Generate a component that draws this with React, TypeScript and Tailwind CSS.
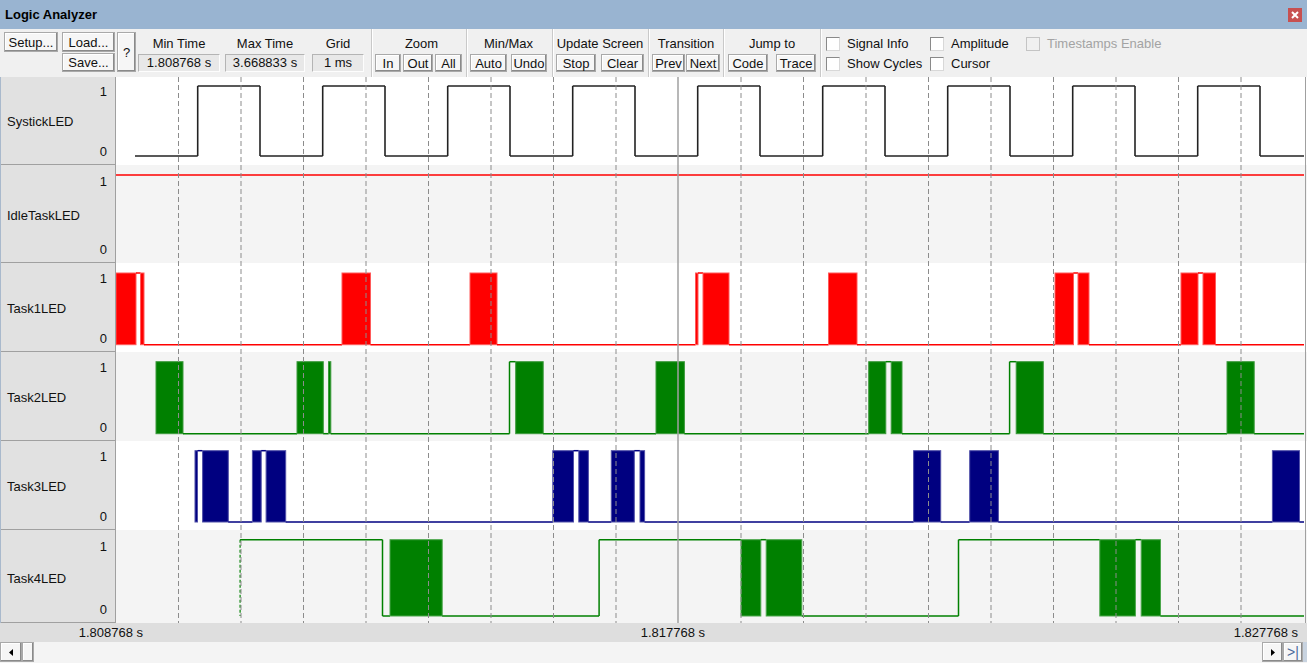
type Kind = 'L' | 'H' | 'F';
type Seg = [Kind, number, number];

interface Signal {
  name: string;
  top: number;
  height: number;
  shade: boolean;
  hi: number;
  lo: number;
  color: string;
  edge: string;
  width: number;
  segs: Seg[];
  dashStart?: boolean;
}

// plot origin in page coordinates
const X0 = 116;
const Y0 = 77;
const PLOT_W = 1191;
const PLOT_H = 546;

function systick(): Seg[] {
  const segs: Seg[] = [['L', 135, 197.7]];
  for (let k = 0; k < 9; k++) {
    const r = 197.7 + 125 * k;
    segs.push(['H', r, r + 62.3]);
    segs.push(['L', r + 62.3, k === 8 ? 1304 : r + 125]);
  }
  return segs;
}

const signals: Signal[] = [
  { name: 'SystickLED', top: 77, height: 88, shade: false, hi: 86, lo: 156, color: '#222', edge: '#222', width: 1.6, segs: systick() },
  { name: 'IdleTaskLED', top: 165, height: 98, shade: true, hi: 175, lo: 255, color: '#ff0000', edge: '#ff0000', width: 1.4, segs: [['H', 116, 1304]] },
  {
    name: 'Task1LED', top: 263, height: 89, shade: false, hi: 273, lo: 344.7, color: '#ff0000', edge: '#ff5a5a', width: 1.5,
    segs: [
      ['F', 116, 136], ['H', 136, 140.5], ['F', 140.5, 144], ['L', 144, 342], ['F', 342, 370.5], ['L', 370.5, 470],
      ['F', 470, 497], ['L', 497, 695.5], ['F', 695.5, 698], ['H', 698, 703], ['F', 703, 729], ['L', 729, 828.5],
      ['F', 828.5, 857], ['L', 857, 1055], ['F', 1055, 1073.5], ['H', 1073.5, 1078], ['F', 1078, 1089], ['L', 1089, 1181],
      ['F', 1181, 1198], ['H', 1198, 1203], ['F', 1203, 1215.5], ['L', 1215.5, 1304],
    ],
  },
  {
    name: 'Task2LED', top: 352, height: 89, shade: true, hi: 361.7, lo: 433.7, color: '#008000', edge: '#3c9a3c', width: 1.5,
    segs: [
      ['F', 156, 183], ['L', 183, 297], ['F', 297, 323.3], ['L', 323.3, 328.5], ['F', 328.5, 330.8], ['L', 330.8, 509.5],
      ['H', 509.5, 515.7], ['F', 515.7, 543.2], ['L', 543.2, 656], ['F', 656, 684.4], ['L', 684.4, 868.7],
      ['F', 868.7, 885.8], ['H', 885.8, 891.2], ['F', 891.2, 902], ['L', 902, 1009.6], ['H', 1009.6, 1016.2],
      ['F', 1016.2, 1043.3], ['L', 1043.3, 1227], ['F', 1227, 1254.2], ['L', 1254.2, 1304],
    ],
  },
  {
    name: 'Task3LED', top: 441, height: 89, shade: false, hi: 450.7, lo: 522, color: '#000080', edge: '#5050a8', width: 1.5,
    segs: [
      ['F', 195, 197.5], ['H', 197.5, 202.6], ['F', 202.6, 228.3], ['L', 228.3, 252.4], ['F', 252.4, 261.2],
      ['H', 261.2, 266.1], ['F', 266.1, 285.7], ['L', 285.7, 552.8], ['F', 552.8, 573.5], ['H', 573.5, 578.8],
      ['F', 578.8, 588.4], ['L', 588.4, 611.3], ['F', 611.3, 634.3], ['H', 634.3, 640], ['F', 640, 644.6],
      ['L', 644.6, 913.6], ['F', 913.6, 940.7], ['L', 940.7, 969.7], ['F', 969.7, 998.4], ['L', 998.4, 1272.4],
      ['F', 1272.4, 1299.5], ['L', 1299.5, 1304],
    ],
  },
  {
    name: 'Task4LED', top: 530, height: 93, shade: true, hi: 539.7, lo: 616, color: '#008000', edge: '#4aa64a', width: 1.5, dashStart: true,
    segs: [
      ['H', 240.1, 382.5], ['L', 382.5, 390], ['F', 390, 442.2], ['L', 442.2, 599.1], ['H', 599.1, 741],
      ['F', 741, 760.8], ['H', 760.8, 766.2], ['F', 766.2, 801.8], ['L', 801.8, 958.5], ['H', 958.5, 1099.8],
      ['F', 1099.8, 1135.4], ['H', 1135.4, 1141.2], ['F', 1141.2, 1160.5], ['L', 1160.5, 1304],
    ],
  },
];

function Wave({ sig }: { sig: Signal }) {
  const hi = sig.hi - Y0;
  const lo = sig.lo - Y0;
  const els: React.ReactNode[] = [];
  sig.segs.forEach(([k, a, b], i) => {
    const x1 = a - X0;
    const x2 = b - X0;
    if (k === 'F') {
      els.push(
        <rect key={'r' + i} x={x1} y={hi} width={x2 - x1} height={lo - hi} fill={sig.color} stroke={sig.edge} strokeWidth={1} />
      );
    } else {
      const y = k === 'H' ? hi : lo;
      els.push(<line key={'l' + i} x1={x1} x2={x2} y1={y} y2={y} stroke={sig.color} strokeWidth={sig.width} />);
    }
    const prev = sig.segs[i - 1];
    if (prev && prev[0] !== 'F' && k !== 'F' && prev[0] !== k) {
      els.push(<line key={'v' + i} x1={x1} x2={x1} y1={hi} y2={lo} stroke={sig.color} strokeWidth={sig.width} />);
    }
  });
  if (sig.dashStart) {
    const x = sig.segs[0][1] - X0;
    els.push(<line key="ds" x1={x} x2={x} y1={hi} y2={lo} stroke={sig.color} strokeWidth={1.2} strokeDasharray="3 2" />);
  }
  return <g>{els}</g>;
}

function Plot() {
  const grid: number[] = [];
  for (let k = 0; k < 18; k++) grid.push(178 + 62.5 * k);
  return (
    <svg width={PLOT_W} height={PLOT_H} className="block">
      {signals.map((s) => (
        <rect key={s.name} x={0} y={s.top - Y0} width={PLOT_W} height={s.height} fill={s.shade ? '#f4f4f4' : '#ffffff'} />
      ))}
      {signals.map((s) => (
        <Wave key={s.name} sig={s} />
      ))}
      {grid.map((g) =>
        g === 678 ? (
          <line key={g} x1={g - X0} x2={g - X0} y1={0} y2={PLOT_H} stroke="#a0a0a0" strokeWidth={1.5} />
        ) : (
          <line key={g} x1={g - X0 + 0.5} x2={g - X0 + 0.5} y1={0} y2={PLOT_H} stroke="#8c8c8c" strokeWidth={1} strokeDasharray="5 3" />
        )
      )}
      <line x1={1189.5} x2={1189.5} y1={0} y2={PLOT_H} stroke="#a0a0a0" strokeWidth={1} />
    </svg>
  );
}

function Btn({ className, children }: { className: string; children: React.ReactNode }) {
  return (
    <div
      className={`flex items-center justify-center border border-[#a9a9a9] bg-[#f6f6f6] leading-none shadow-[inset_-1px_-1px_0_#8a8a8a,inset_1px_1px_0_#ffffff] ${className}`}
    >
      {children}
    </div>
  );
}

function Field({ label, value, className }: { label: string; value: string; className: string }) {
  return (
    <div className="flex flex-col items-center">
      <div className="h-[16px] leading-[16px] whitespace-nowrap">{label}</div>
      <div className={`mt-[2px] flex h-[18px] items-center justify-center border border-t-[#b4b4b4] border-l-[#b4b4b4] border-r-[#fdfdfd] border-b-[#fdfdfd] bg-[#e8e8e8] ${className}`}>
        {value}
      </div>
    </div>
  );
}

function Sep() {
  return <div className="h-full w-[2px] border-l border-[#c9c9c9] bg-white" />;
}

function Check({ label, disabled }: { label: string; disabled?: boolean }) {
  return (
    <div className="flex h-[20px] items-center gap-[7px] whitespace-nowrap">
      <div
        className={
          disabled
            ? 'h-[14px] w-[14px] border border-[#c4c4c4] bg-[#f0f0f0]'
            : 'h-[14px] w-[14px] border border-t-[#8a8a8a] border-l-[#8a8a8a] border-r-[#d8d8d8] border-b-[#d8d8d8] bg-white'
        }
      />
      <span className={disabled ? 'text-[#a3a3a3]' : ''}>{label}</span>
    </div>
  );
}

function Toolbar() {
  return (
    <div className="flex h-[48px] bg-[#f0f0f0]">
      <div className="flex pl-[4px] pt-[3px]">
        <Btn className="h-[20px] w-[54px]">Setup...</Btn>
        <div className="ml-[4px] flex flex-col gap-[1px]">
          <Btn className="h-[20px] w-[53px]">Load...</Btn>
          <Btn className="h-[19px] w-[53px]">Save...</Btn>
        </div>
        <Btn className="ml-[2px] h-[40px] w-[19px]">?</Btn>
      </div>
      <div className="ml-[2px] flex pt-[7px]">
        <Field label="Min Time" value="1.808768 s" className="w-[82px]" />
        <div className="ml-[5px]">
          <Field label="Max Time" value="3.668833 s" className="w-[80px]" />
        </div>
        <div className="ml-[7px]">
          <Field label="Grid" value="1 ms" className="w-[52px]" />
        </div>
      </div>
      <div className="ml-[7px]">
        <Sep />
      </div>
      <div className="flex flex-col items-center pl-[2px] pr-[4px] pt-[7px]">
        <div className="h-[16px] pl-[6px] leading-[16px]">Zoom</div>
        <div className="mt-[2px] flex gap-[2px]">
          <Btn className="h-[18px] w-[26px]">In</Btn>
          <Btn className="h-[18px] w-[30px]">Out</Btn>
          <Btn className="h-[18px] w-[27px]">All</Btn>
        </div>
      </div>
      <Sep />
      <div className="flex flex-col items-center pl-[2px] pr-[5px] pt-[7px]">
        <div className="h-[16px] leading-[16px]">Min/Max</div>
        <div className="mt-[2px] flex gap-[4px]">
          <Btn className="h-[18px] w-[37px]">Auto</Btn>
          <Btn className="h-[18px] w-[36px]">Undo</Btn>
        </div>
      </div>
      <Sep />
      <div className="flex flex-col items-center pl-[2px] pr-[4px] pt-[7px]">
        <div className="h-[16px] leading-[16px] whitespace-nowrap">Update Screen</div>
        <div className="mt-[2px] flex gap-[5px]">
          <Btn className="h-[18px] w-[40px]">Stop</Btn>
          <Btn className="h-[18px] w-[43px]">Clear</Btn>
        </div>
      </div>
      <Sep />
      <div className="flex flex-col items-center pl-[2px] pr-[3px] pt-[7px]">
        <div className="h-[16px] leading-[16px]">Transition</div>
        <div className="mt-[2px] flex gap-[1px]">
          <Btn className="h-[18px] w-[33px]">Prev</Btn>
          <Btn className="h-[18px] w-[34px]">Next</Btn>
        </div>
      </div>
      <Sep />
      <div className="flex flex-col items-center pl-[3px] pr-[4px] pt-[7px]">
        <div className="h-[16px] leading-[16px]">Jump to</div>
        <div className="mt-[2px] flex gap-[8px]">
          <Btn className="h-[18px] w-[40px]">Code</Btn>
          <Btn className="h-[18px] w-[40px]">Trace</Btn>
        </div>
      </div>
      <Sep />
      <div className="flex pl-[4px] pt-[5px]">
        <div className="w-[104px]">
          <Check label="Signal Info" />
          <Check label="Show Cycles" />
        </div>
        <div className="w-[96px]">
          <Check label="Amplitude" />
          <Check label="Cursor" />
        </div>
        <div>
          <Check label="Timestamps Enable" disabled />
        </div>
      </div>
    </div>
  );
}

function Labels() {
  return (
    <div className="flex w-[116px] flex-col border-l border-[#a9b9cc]">
      {signals.map((s, i) => (
        <div
          key={s.name}
          className={`flex flex-col border-b border-r border-[#a0a0a0] bg-[#e1e1e1] pl-[6px] pr-[8px] ${
            i === 0 ? 'h-[88px] pt-[7px] pb-[4px]' : i === 1 ? 'h-[98px] pt-[9px] pb-[4px]' : i === 5 ? 'h-[93px] pt-[9px] pb-[4px]' : 'h-[89px] pt-[8px] pb-[4px]'
          }`}
        >
          <div className="h-[16px] text-right leading-[16px]">1</div>
          <div className="flex flex-1 items-center">{s.name}</div>
          <div className="h-[16px] text-right leading-[16px]">0</div>
        </div>
      ))}
    </div>
  );
}

function Tri({ dir }: { dir: 'l' | 'r' }) {
  return (
    <svg width="4" height="7" viewBox="0 0 4 7">
      <polygon points={dir === 'l' ? '4,0 4,7 0,3.5' : '0,0 0,7 4,3.5'} fill="#000" />
    </svg>
  );
}

export default function App() {
  return (
    <div className="flex h-[663px] w-[1307px] flex-col overflow-hidden bg-[#f0f0f0] font-['Liberation_Sans',Arial,sans-serif] text-[13px] text-[#111]">
      <div className="flex h-[29px] items-center justify-between bg-[#99b4d1] pl-[5px] pr-[5px]">
        <span className="font-bold text-black">Logic Analyzer</span>
        <div className="flex h-[14px] w-[14px] items-center justify-center bg-[#c75050]">
          <svg width="8" height="8" viewBox="0 0 8 8">
            <path d="M1 1 L7 7 M7 1 L1 7" stroke="#fff" strokeWidth="2" />
          </svg>
        </div>
      </div>
      <Toolbar />
      <div className="flex h-[546px]">
        <Labels />
        <Plot />
      </div>
      <div className="flex h-[19px] items-center bg-[#dedede]">
        <div className="w-[143px] text-right">1.808768 s</div>
        <div className="w-[562px] text-right">1.817768 s</div>
        <div className="flex-1 pr-[9px] text-right">1.827768 s</div>
      </div>
      <div className="flex h-[21px] items-stretch bg-[#f4f4f4] pb-[1px]">
        <Btn className="w-[22px]">
          <Tri dir="l" />
        </Btn>
        <Btn className="w-[12px]">{''}</Btn>
        <div className="flex-1" />
        <Btn className="w-[21px]">
          <Tri dir="r" />
        </Btn>
        <Btn className="w-[20px] text-[14px] text-[#4a6a9c]">&gt;|</Btn>
        <div className="w-[4px] bg-[#c8d3e0]" />
      </div>
    </div>
  );
}
